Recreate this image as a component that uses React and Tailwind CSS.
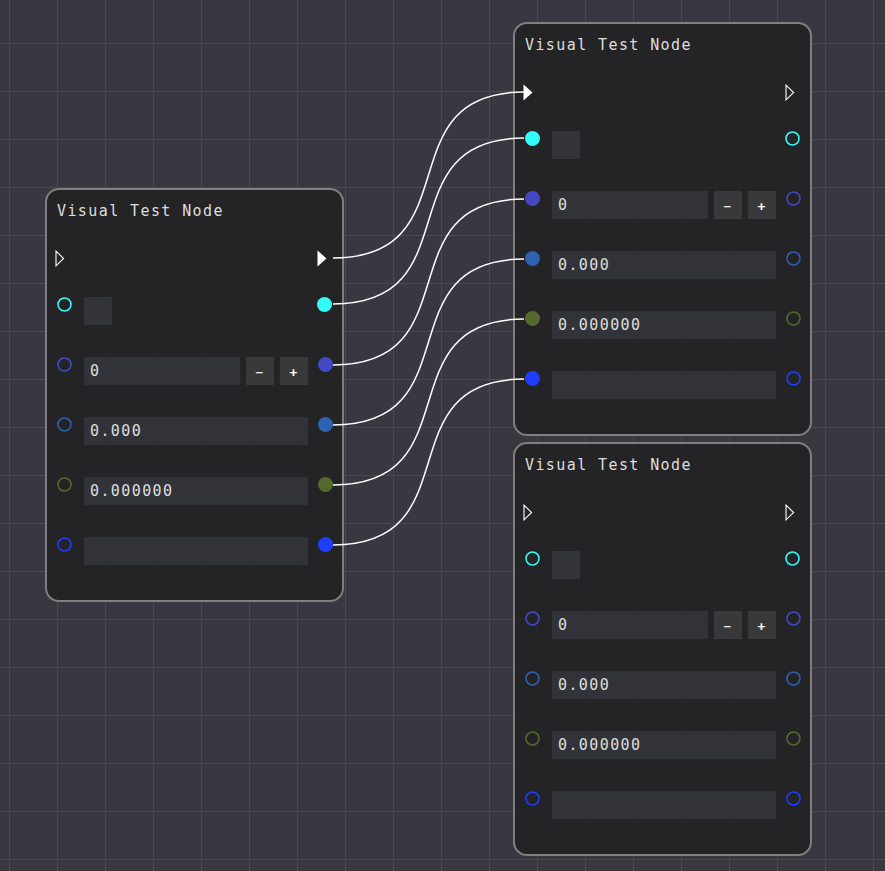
import React from 'react';

const rows = [
  { color: '#33fbfb', widget: 'square' },
  { color: '#4349c3', widget: 'int', value: '0' },
  { color: '#2e61b0', widget: 'field', value: '0.000' },
  { color: '#55692f', widget: 'field', value: '0.000000' },
  { color: '#1f3dfe', widget: 'field', value: '' },
];

const nodes = [
  { id: 1, pos: 'left-[45px] top-[188px]', execIn: false, execOut: true, pinsIn: false, pinsOut: true },
  { id: 2, pos: 'left-[513px] top-[22px]', execIn: true, execOut: false, pinsIn: true, pinsOut: false },
  { id: 3, pos: 'left-[513px] top-[442px]', execIn: false, execOut: false, pinsIn: false, pinsOut: false },
];

const links = [
  [258, 92],
  [304, 138],
  [365, 199],
  [425, 259],
  [485, 319],
  [545, 379],
];

const Pin = ({ color, filled }) => (
  <svg width="15" height="15" viewBox="0 0 15 15" className="block shrink-0">
    {filled ? (
      <circle cx="7.5" cy="7.5" r="7.5" fill={color} />
    ) : (
      <circle cx="7.5" cy="7.5" r="6.5" fill="none" stroke={color} strokeWidth="1.6" />
    )}
  </svg>
);

const ExecPin = ({ filled, className }) => (
  <svg width="10" height="17" viewBox="0 0 10 17" className={`block shrink-0 ${className}`}>
    {filled ? (
      <path d="M0.5 0.5 L9.5 8.5 L0.5 16.5 Z" fill="#ffffff" />
    ) : (
      <path d="M1 1.2 L8.6 8.5 L1 15.8 Z" fill="none" stroke="#ffffff" strokeWidth="1.1" strokeLinejoin="miter" />
    )}
  </svg>
);

const Widget = ({ row }) => {
  if (row.widget === 'square') {
    return <div className="w-[28px] h-[28px] bg-[#333439]" />;
  }
  if (row.widget === 'int') {
    return (
      <div className="flex w-[224px]">
        <div className="w-[156px] h-[28px] bg-[#323338] pl-[6px] leading-[29px]">{row.value}</div>
        <div className="ml-[6px] w-[28px] h-[28px] bg-[#39393c] flex items-center justify-center text-[13px] leading-none pt-[3px] text-white">−</div>
        <div className="ml-[6px] w-[28px] h-[28px] bg-[#39393c] flex items-center justify-center text-[13px] leading-none pt-[3px] text-white font-bold">+</div>
      </div>
    );
  }
  return <div className="w-[224px] h-[28px] bg-[#323338] pl-[6px] leading-[29px]">{row.value}</div>;
};

const Node = ({ node }) => (
  <div
    className={`absolute ${node.pos} w-[299px] h-[414px] rounded-[14px] border-2 border-[#7f7f7f] bg-[#222224]/90 text-[#dedede] text-[15px] tracking-[1.4px] font-['DejaVu_Sans_Mono',monospace]`}
  >
    <div className="pt-[11px] px-[10px]">
      <div className="h-[20px] leading-[20px] whitespace-nowrap">Visual Test Node</div>

      <div className="mt-[29px] h-[17px] flex justify-between">
        <ExecPin filled={node.execIn} className="-ml-[2px]" />
        <ExecPin filled={node.execOut} className="mr-[5px]" />
      </div>

      {rows.map((row, i) => (
        <div key={i} className={`flex items-start ${i === 0 ? 'mt-[30px]' : 'mt-[32px]'}`}>
          <Pin color={row.color} filled={node.pinsIn} />
          <div className="ml-[12px] w-[224px] flex">
            <Widget row={row} />
          </div>
          <div className="ml-[10px]">
            <Pin color={row.color} filled={node.pinsOut} />
          </div>
        </div>
      ))}
    </div>
  </div>
);

export default function App() {
  return (
    <div className="relative w-full h-screen overflow-hidden bg-[#393841] bg-[linear-gradient(to_right,#4a4952_1px,transparent_1px),linear-gradient(to_bottom,#4a4952_1px,transparent_1px)] bg-size-[48px_48px] bg-position-[9px_43px]">
      {nodes.map((node) => (
        <Node key={node.id} node={node} />
      ))}

      <svg className="absolute inset-0 w-full h-full pointer-events-none" width="885" height="871">
        {links.map(([y1, y2], i) => (
          <path
            key={i}
            d={`M333 ${y1} C473 ${y1} 384 ${y2} 524 ${y2}`}
            fill="none"
            stroke="#ffffff"
            strokeWidth="1.5"
          />
        ))}
      </svg>
    </div>
  );
}
